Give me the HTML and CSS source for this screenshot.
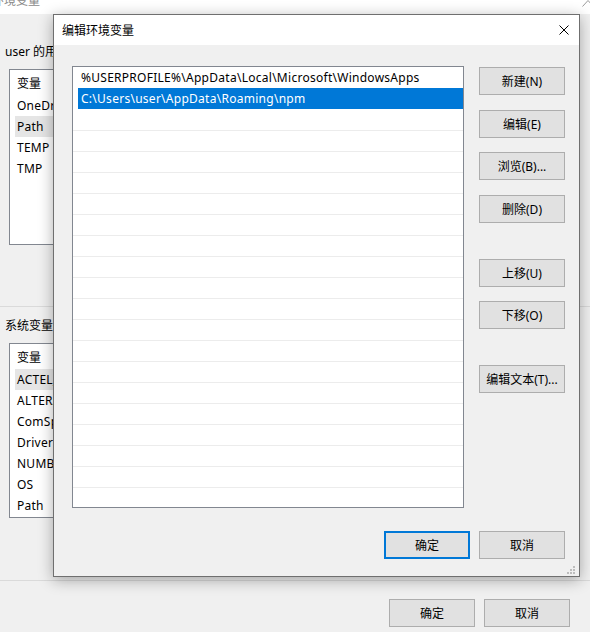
FILE: index.html
```html
<!DOCTYPE html>
<html lang="zh-CN">
<head>
<meta charset="utf-8">
<title>编辑环境变量</title>
<link rel="stylesheet" href="styles.css">
</head>
<body>
<div class="bgwin">
  <div class="bg-title">
    <span class="bg-title-text">环境变量</span>
    <svg class="chev" width="12" height="10" viewBox="0 0 12 10"><path d="M0.5 8.5L6 2.5L11.5 8.5" fill="none" stroke="#9a9a9a" stroke-width="1"/></svg>
  </div>
  <div class="bg-section bg-user">
    <div class="bg-label">user 的用户变量(U)</div>
    <div class="bg-list bg-list-user">
      <div class="bg-head">变量</div>
      <div class="bg-row">OneDrive</div>
      <div class="bg-row sel">Path</div>
      <div class="bg-row">TEMP</div>
      <div class="bg-row">TMP</div>
    </div>
  </div>
  <div class="bg-section bg-sys">
    <div class="bg-label">系统变量(S)</div>
    <div class="bg-list bg-list-sys">
      <div class="bg-head">变量</div>
      <div class="bg-row sel">ACTEL_FOR_ALTIUM_OVERRIDE</div>
      <div class="bg-row">ALTERA_ROOTDIR</div>
      <div class="bg-row">ComSpec</div>
      <div class="bg-row">DriverData</div>
      <div class="bg-row">NUMBER_OF_PROCESSORS</div>
      <div class="bg-row">OS</div>
      <div class="bg-row">Path</div>
    </div>
  </div>
  <div class="bg-footer">
    <button class="btn">确定</button>
    <button class="btn">取消</button>
  </div>
</div>

<div class="dialog">
  <div class="dlg-title">
    <span class="dlg-title-text">编辑环境变量</span>
    <svg class="close" width="10" height="10" viewBox="0 0 10 10"><path d="M0.5 0.5L9.5 9.5M9.5 0.5L0.5 9.5" stroke="#000" stroke-width="1"/></svg>
  </div>
  <div class="dlg-body">
    <div class="dlg-main">
      <div class="path-list">
        <div class="path-item">%USERPROFILE%\AppData\Local\Microsoft\WindowsApps</div>
        <div class="path-item selected">C:\Users\user\AppData\Roaming\npm</div>
        <div class="path-fill"></div>
      </div>
      <div class="side">
        <div class="side-group g1">
          <button class="btn">新建(N)</button>
          <button class="btn">编辑(E)</button>
          <button class="btn">浏览(B)...</button>
          <button class="btn">删除(D)</button>
        </div>
        <div class="side-group g2">
          <button class="btn">上移(U)</button>
          <button class="btn">下移(O)</button>
        </div>
        <div class="side-group g3">
          <button class="btn">编辑文本(T)...</button>
        </div>
      </div>
    </div>
    <div class="dlg-footer">
      <button class="btn default">确定</button>
      <button class="btn">取消</button>
    </div>
  </div>
  <svg class="grip" width="8" height="8" viewBox="0 0 8 8">
    <rect x="6" y="0" width="2" height="2" fill="#bdbdbd"/>
    <rect x="3" y="3" width="2" height="2" fill="#bdbdbd"/>
    <rect x="6" y="3" width="2" height="2" fill="#bdbdbd"/>
    <rect x="0" y="6" width="2" height="2" fill="#bdbdbd"/>
    <rect x="3" y="6" width="2" height="2" fill="#bdbdbd"/>
    <rect x="6" y="6" width="2" height="2" fill="#bdbdbd"/>
  </svg>
</div>
</body>
</html>
```

FILE: styles.css
```css
* { box-sizing: border-box; }
html, body { margin: 0; padding: 0; }
body {
  width: 590px;
  height: 632px;
  overflow: hidden;
  background: #f0f0f0;
  font-family: "Noto Sans", "Noto Sans CJK SC", sans-serif;
  font-size: 12px;
  color: #000;
  position: relative;
}

/* ---------- background window ---------- */
.bgwin { width: 590px; height: 632px; }
.bg-title {
  height: 14px;
  background: #fff;
  overflow: hidden;
  position: relative;
}
.bg-title-text {
  display: block;
  margin-left: -8px;
  margin-top: -7px;
  line-height: 16px;
  color: #8a8a8a;
}
.chev { position: absolute; right: -4px; top: -2px; }

.bg-section { border-bottom: 1px solid #dadada; padding-left: 5px; }
.bg-user { height: 293px; padding-top: 30px; }
.bg-sys { height: 274px; padding-top: 11px; }
.bg-label { line-height: 16px; height: 16px; white-space: nowrap; }
.bg-user .bg-label { margin-bottom: 9px; }
.bg-sys .bg-label { margin-bottom: 9px; }

.bg-list {
  margin-left: 4px;
  width: 560px;
  background: #fff;
  border: 1px solid #828790;
  letter-spacing: 0.25px;
}
.bg-list-user { height: 176px; }
.bg-list-sys { height: 175px; }
.bg-head {
  height: 25px;
  line-height: 25px;
  padding-left: 7px;
  padding-top: 1px;
  letter-spacing: 0;
}
.bg-row {
  height: 21px;
  line-height: 20px;
  padding-top: 1px;
  margin-left: 5px;
  padding-left: 2px;
  white-space: nowrap;
}
.bg-row.sel { background: #e5e5e5; }

.bg-footer {
  display: flex;
  justify-content: flex-end;
  gap: 9px;
  padding: 18px 20px 0 0;
}

/* ---------- buttons ---------- */
.btn {
  width: 86px;
  height: 28px;
  margin: 0;
  padding: 1px 0 0;
  background: #e1e1e1;
  border: 1px solid #adadad;
  font: inherit;
  color: #000;
  line-height: 25px;
  text-align: center;
  white-space: nowrap;
}
.btn.default { border: 2px solid #0078d7; line-height: 23px; }

/* ---------- dialog ---------- */
.dialog {
  position: absolute;
  left: 53px;
  top: 14px;
  width: 527px;
  height: 563px;
  background: #f0f0f0;
  border: 1px solid #6f6f6f;
  box-shadow: 0 3px 14px rgba(0, 0, 0, 0.32);
  display: flex;
  flex-direction: column;
}
.dlg-title {
  height: 30px;
  background: #fff;
  display: flex;
  align-items: center;
  justify-content: space-between;
  padding: 0 10px 0 8px;
}
.dlg-title-text { line-height: 16px; padding-top: 2px; }
.close { display: block; }

.dlg-body {
  flex: 1;
  display: flex;
  flex-direction: column;
  padding: 21px 14px 17px 18px;
}
.dlg-main { display: flex; gap: 15px; }

.path-list {
  width: 392px;
  height: 442px;
  background: #fff;
  border: 1px solid #828790;
  display: flex;
  flex-direction: column;
}
.path-item {
  height: 21px;
  line-height: 20px;
  padding-top: 1px;
  margin-left: 5px;
  padding-left: 3px;
  white-space: nowrap;
  letter-spacing: 0.27px;
}
.path-item.selected { background: #0078d7; color: #fff; }
.path-fill {
  flex: 1;
  margin-top: 21px;
  background: repeating-linear-gradient(to bottom, #ececec 0, #ececec 1px, transparent 1px, transparent 21px);
}

.side { display: flex; flex-direction: column; padding-top: 1px; }
.side-group { display: flex; flex-direction: column; }
.g1 { gap: 14.6px; }
.g2 { gap: 14px; margin-top: 36px; }
.g3 { margin-top: 36px; }

.dlg-footer {
  margin-top: auto;
  display: flex;
  justify-content: flex-end;
  gap: 9px;
}

.grip { position: absolute; right: 4px; bottom: 2px; }
```
